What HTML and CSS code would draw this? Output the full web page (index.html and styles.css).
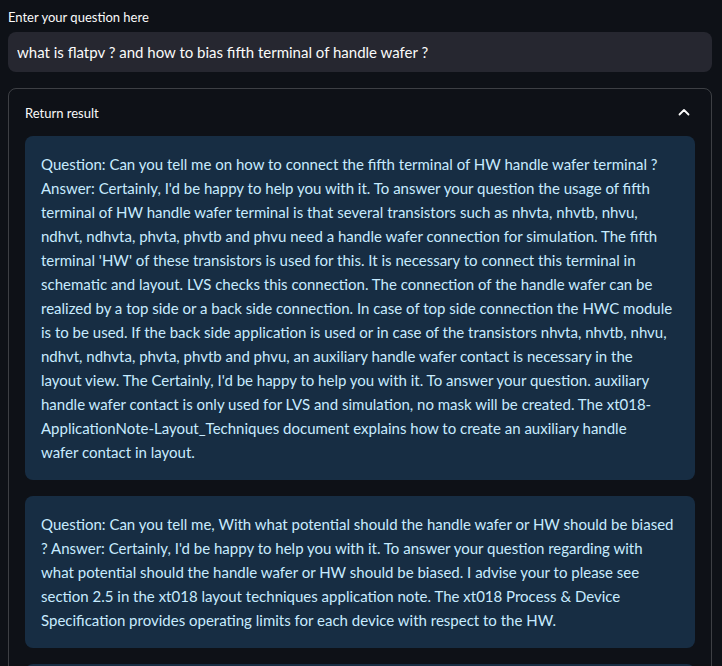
FILE: index.html
```html
<!DOCTYPE html>
<html lang="en">
<head>
<meta charset="utf-8">
<title>Question answering</title>
<link rel="stylesheet" href="styles.css">
</head>
<body>
<main class="app">
  <label class="field-label" for="q">Enter your question here</label>
  <div class="text-input">
    <input id="q" type="text" value="what is flatpv ? and how to bias fifth terminal of handle wafer ?">
  </div>

  <section class="expander">
    <header class="expander-head">
      <span class="expander-title">Return result</span>
      <svg class="chevron" width="12" height="8" viewBox="0 0 12 8" aria-hidden="true">
        <polyline points="1.5,6.5 6,2 10.5,6.5" fill="none" stroke="#fafafa" stroke-width="1.8" stroke-linecap="round" stroke-linejoin="round"/>
      </svg>
    </header>
    <div class="expander-body">
      <div class="info">Question: Can you tell me on how to connect the fifth terminal of HW handle wafer terminal ? Answer: Certainly, I'd be happy to help you with it. To answer your question the usage of fifth terminal of HW handle wafer terminal is that several transistors such as nhvta, nhvtb, nhvu, ndhvt, ndhvta, phvta, phvtb and phvu need a handle wafer connection for simulation. The fifth terminal 'HW' of these transistors is used for this. It is necessary to connect this terminal in schematic and layout. LVS checks this connection. The connection of the handle wafer can be realized by a top side or a back side connection. In case of top side connection the HWC module is to be used. If the back side application is used or in case of the transistors nhvta, nhvtb, nhvu, ndhvt, ndhvta, phvta, phvtb and phvu, an auxiliary handle wafer contact is necessary in the layout view. The Certainly, I'd be happy to help you with it. To answer your question. auxiliary handle wafer contact is only used for LVS and simulation, no mask will be created. The xt018-ApplicationNote-Layout_Techniques document explains how to create an auxiliary handle wafer&nbsp;contact in layout.</div>
      <div class="info">Question: Can you tell me, With what potential should the handle wafer or HW should be biased ? Answer: Certainly, I'd be happy to help you with it. To answer your question regarding with what potential should the handle wafer or HW should be biased. I advise your to please see section 2.5 in the xt018 layout techniques application note. The xt018 Process &amp; Device Specification provides operating limits for each device with respect to the HW.</div>
      <div class="info">Question: What is flatpv and how is it used in the verification flow ? Answer: Certainly, I'd be happy to help you with it.</div>
    </div>
  </section>
</main>
</body>
</html>
```
FILE: styles.css
```css
html, body {
  margin: 0;
  padding: 0;
  background: #0e1117;
  color: #fafafa;
  font-family: "Lato", "Noto Sans", sans-serif;
  overflow: hidden;
  height: 666px;
}

.app {
  width: 704px;
  padding: 7px 0 0 8px;
  display: flex;
  flex-direction: column;
}

.field-label {
  font-size: 13px;
  line-height: 20px;
  height: 20px;
  margin-bottom: 5px;
  color: #fafafa;
}

.text-input {
  background: #262730;
  border-radius: 8px;
  height: 40px;
  display: flex;
  align-items: center;
}

.text-input input {
  background: transparent;
  border: none;
  outline: none;
  color: #fafafa;
  font-family: inherit;
  font-size: 15px;
  padding: 0 9px;
  width: 100%;
  box-sizing: border-box;
  height: 40px;
}

.expander {
  margin-top: 16px;
  border: 1px solid rgba(250, 250, 250, 0.2);
  border-radius: 8px;
}

.expander-head {
  display: flex;
  align-items: center;
  justify-content: space-between;
  height: 46px;
  padding: 0 21px 0 16px;
}

.expander-title {
  font-size: 13px;
  line-height: 20px;
  padding-top: 1px;
}

.chevron {
  display: block;
}

.expander-body {
  padding: 1px 16px 16px;
  display: flex;
  flex-direction: column;
  gap: 16px;
}

.info {
  background: #172d43;
  color: #c7ebff;
  border-radius: 8px;
  padding: 16px 20px 16px 16px;
  font-size: 15px;
  line-height: 24px;
}
```
